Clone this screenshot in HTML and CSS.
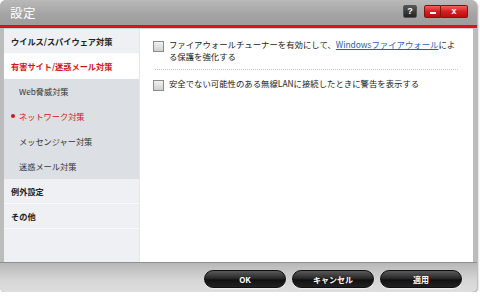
FILE: index.html
```html
<!DOCTYPE html>
<html lang="ja">
<head>
    <meta charset="UTF-8">
    <title>設定</title>
    <link rel="stylesheet" href="styles.css">
</head>
<body>

    <div class="window">
        <div class="titlebar">
            <span class="title">設定</span>
            <div class="title-buttons">
                <span class="tbtn help">?</span>
                <span class="tbtn min"><i></i></span>
                <span class="tbtn close">x</span>
            </div>
        </div>
        <div class="redline"></div>

        <div class="main">
            <ul class="sidebar">
                <li class="cat">ウイルス/スパイウェア対策</li>
                <li class="cat active">有害サイト/迷惑メール対策</li>
                <li class="sub">Web脅威対策</li>
                <li class="sub current">ネットワーク対策</li>
                <li class="sub">メッセンジャー対策</li>
                <li class="sub">迷惑メール対策</li>
                <li class="cat">例外設定</li>
                <li class="cat">その他</li>
            </ul>

            <div class="content">
                <label class="option">
                    <span class="check"></span>
                    <span class="text">
                        <span class="line">ファイアウォールチューナーを有効にして、<a href="#">Windowsファイアウォール</a>によ</span>
                        <span class="line">る保護を強化する</span>
                    </span>
                </label>
                <div class="divider"></div>
                <label class="option">
                    <span class="check"></span>
                    <span class="text">安全でない可能性のある無線LANに接続したときに警告を表示する</span>
                </label>
            </div>
        </div>

        <div class="footer">
            <button class="btn">OK</button>
            <button class="btn">キャンセル</button>
            <button class="btn">適用</button>
        </div>
    </div>

</body>
</html>
```

FILE: styles.css
```css
body {
    margin: 0;
    background: #fff;
    font-family: "Noto Sans CJK JP", "Noto Sans", sans-serif;
    color: #333;
}
.window {
    width: 477px;
    height: 292px;
    display: flex;
    flex-direction: column;
    background: #bcbcbc;
    border-radius: 6px 6px 5px 5px;
    overflow: hidden;
    box-shadow: 1px 1px 2px rgba(0, 0, 0, 0.35);
}
.titlebar {
    height: 25px;
    display: flex;
    align-items: center;
    justify-content: space-between;
    padding: 0 9px 0 10px;
    background: linear-gradient(#b9b9b9, #a3a3a3 60%, #9d9d9d);
}
.title {
    color: #fff;
    font-size: 12.5px;
    letter-spacing: 0.5px;
}
.title-buttons {
    display: flex;
    align-items: center;
    margin-top: -3px;
}
.tbtn {
    height: 11px;
    display: flex;
    align-items: center;
    justify-content: center;
    color: #fff;
    font-family: "Liberation Sans", sans-serif;
    font-weight: bold;
    font-size: 9px;
    border: 1px solid #555;
}
.help {
    width: 12px;
    margin-right: 7px;
    background: linear-gradient(#555, #222);
    border-radius: 2px;
}
.min {
    width: 15px;
    border-radius: 2px 0 0 2px;
    border-color: #8a1010;
    background: linear-gradient(#f06060, #d42020 50%, #b80f0f);
}
.min i {
    width: 6px;
    height: 2px;
    margin-top: 3px;
    background: #fff;
}
.close {
    width: 26px;
    border-left: none;
    border-radius: 0 2px 2px 0;
    border-color: #8a1010;
    background: linear-gradient(#f06060, #d42020 50%, #b80f0f);
}
.redline {
    height: 3px;
    background: #d8141b;
}
.main {
    flex: 1;
    display: flex;
    margin: 0 4px 0 4px;
    border-top: 1px solid #d0d0d0;
    background: #fff;
}
.sidebar {
    list-style: none;
    margin: 0;
    padding: 0;
    width: 135px;
    background: #eef0f3;
    border-right: 1px solid #e4e6ea;
}
.sidebar li {
    height: 24px;
    line-height: 24px;
    font-size: 8.2px;
    border-bottom: 1px solid #fafbfc;
}
.cat {
    padding-left: 7px;
    font-weight: bold;
    color: #222;
    background: #eef0f3;
}
.cat.active {
    background: #fff;
    color: #d01818;
}
.sub {
    padding-left: 15px;
    background: #dcdfe3;
    border-bottom-color: #dcdfe3 !important;
}
.sub.current {
    position: relative;
    color: #d01818;
}
.sub.current::before {
    content: "";
    position: absolute;
    left: 7px;
    top: 10px;
    width: 4px;
    height: 4px;
    border-radius: 50%;
    background: #d01818;
}
.content {
    flex: 1;
    padding: 10px 15px 0 13px;
}
.option {
    display: flex;
    align-items: flex-start;
    font-size: 8.4px;
    line-height: 11.5px;
    color: #222;
}
.line {
    display: block;
    white-space: nowrap;
}
.check {
    flex: none;
    width: 9px;
    height: 9px;
    margin: 1.5px 5px 0 0;
    border: 1px solid #8c8c8c;
    background: linear-gradient(#f2f2f2, #cfcfcf);
}
.option a {
    color: #1d63b8;
}
.divider {
    margin: 7px 0 8px 2px;
    border-top: 1px dotted #c4c4c4;
}
.footer {
    height: 30px;
    display: flex;
    align-items: flex-start;
    justify-content: flex-end;
    gap: 6px;
    padding: 7px 15px 0 0;
    box-sizing: border-box;
    border-top: 1px solid #8e8e8e;
    background: linear-gradient(#b8b8b8, #d6d6d6 60%, #dedede);
}
.btn {
    width: 82px;
    height: 18px;
    padding: 0;
    border: 1px solid #111;
    border-radius: 9px;
    background: linear-gradient(#5a5a5a, #2a2a2a 45%, #111 55%, #222);
    color: #fff;
    font-family: "Noto Sans CJK JP", sans-serif;
    font-size: 8px;
    font-weight: bold;
    box-shadow: 0 1px 1px rgba(255, 255, 255, 0.6);
}
```
